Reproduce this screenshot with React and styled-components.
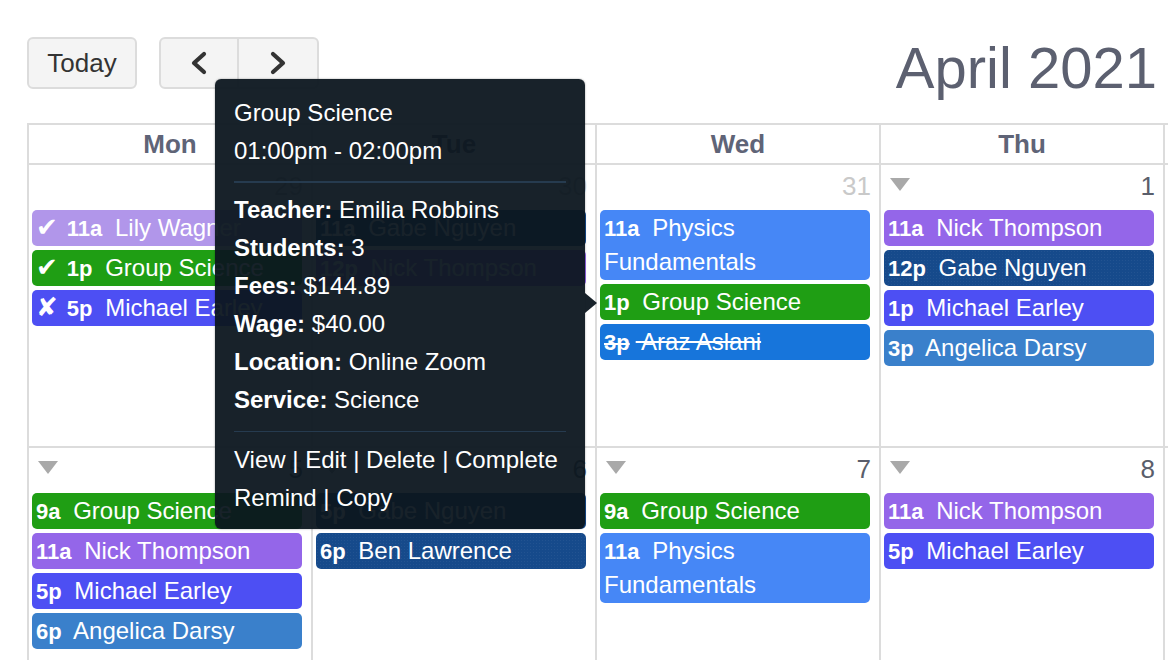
import React from 'react';
import styled, { createGlobalStyle, css } from 'styled-components';

const GlobalStyle = createGlobalStyle`
  html, body {
    margin: 0;
    padding: 0;
    background: #fff;
    overflow: hidden;
  }
  body {
    font-family: "Liberation Sans", Arial, sans-serif;
  }
`;

const colors = {
  lavender: '#b196ea',
  green: '#1f9e14',
  violet: '#4d4ff3',
  physics: '#4687f6',
  araz: '#1775db',
  purple: '#9466e9',
  navy: '#164a8b',
  angelica: '#3a80cb',
};

const Page = styled.div`
  position: relative;
  width: 100vw;
  height: 100vh;
  padding-left: 27px;
  box-sizing: border-box;
  overflow: hidden;
`;

const Toolbar = styled.div`
  display: flex;
  align-items: center;
  justify-content: space-between;
  padding-top: 37px;
  margin-right: 11px;
  margin-bottom: 34px;
  height: 52px;
`;

const ButtonRow = styled.div`
  display: flex;
  align-items: center;
  gap: 22px;
`;

const Button = styled.button`
  display: flex;
  align-items: center;
  justify-content: center;
  height: 52px;
  width: ${p => p.$width || 110}px;
  background: #f4f4f4;
  border: 2px solid #dcdcdc;
  border-radius: 6px;
  color: #333;
  font-family: "Liberation Sans", Arial, sans-serif;
  font-size: 26px;
  padding: 0;
  box-sizing: border-box;
`;

const ButtonGroup = styled.div`
  display: flex;

  ${Button}:first-child {
    border-top-right-radius: 0;
    border-bottom-right-radius: 0;
  }
  ${Button}:last-child {
    border-top-left-radius: 0;
    border-bottom-left-radius: 0;
    border-left: none;
  }
`;

const Title = styled.h2`
  margin: 9px 0 0;
  font-size: 58px;
  font-weight: normal;
  line-height: 58px;
  color: #5c6070;
`;

const Grid = styled.div`
  display: grid;
  grid-template-columns: repeat(7, 282px);
  grid-template-rows: 38px 281px 282px;
  gap: 2px;
  padding: 2px;
  background: #dcdcdc;
  width: max-content;
`;

const HeadCell = styled.div`
  background: #fff;
  display: flex;
  align-items: center;
  justify-content: center;
  font-size: 26px;
  font-weight: bold;
  color: #5f6477;
`;

const DayCell = styled.div`
  background: #fff;
  display: flex;
  flex-direction: column;
`;

const DayTop = styled.div`
  height: 45px;
  display: flex;
  justify-content: space-between;
  align-items: flex-start;
  padding: 8px 8px 0 9px;
  box-sizing: border-box;
`;

const Caret = styled.span`
  width: 0;
  height: 0;
  margin-top: 5px;
  border-left: 10px solid transparent;
  border-right: 10px solid transparent;
  border-top: 13px solid #a9a9a9;
  visibility: ${p => (p.$hidden ? 'hidden' : 'visible')};
`;

const DayNum = styled.span`
  font-size: 26px;
  line-height: 26px;
  color: ${p => (p.$other ? '#c9c9c9' : '#5a5e6b')};
`;

const EventList = styled.div`
  display: flex;
  flex-direction: column;
  gap: 4px;
  padding: 0 9px 0 3px;
`;

const Event = styled.div`
  background-color: ${p => p.$color};
  color: #fff;
  font-size: 24px;
  line-height: 34px;
  padding: 1px 4px;
  border-radius: 5px;
  overflow: hidden;
  white-space: ${p => (p.$wrap ? 'normal' : 'nowrap')};
  text-decoration: ${p => (p.$cancelled ? 'line-through' : 'none')};
  ${p =>
    p.$dotted &&
    css`
      background-image: radial-gradient(rgba(255, 255, 255, 0.05) 0.8px, transparent 1px);
      background-size: 3px 3px;
    `}
`;

const Time = styled.b`
  font-size: 22px;
  line-height: 1;
  margin-right: 6px;
`;

const Mark = styled.b`
  margin-right: 9px;
  font-family: "DejaVu Sans", sans-serif;
  font-size: 26px;
  line-height: 1;
`;

const Tooltip = styled.div`
  position: absolute;
  left: 215px;
  top: 79px;
  width: 370px;
  box-sizing: border-box;
  padding: 15px 19px 12px;
  background: rgba(12, 22, 31, 0.95);
  border-radius: 6px;
  box-shadow: 0 0 2px rgba(0, 0, 0, 0.4);
  color: #fff;
  font-size: 24px;
  line-height: 38px;

  &::after {
    content: '';
    position: absolute;
    right: -12px;
    top: 214px;
    border-top: 10px solid transparent;
    border-bottom: 10px solid transparent;
    border-left: 12px solid rgba(12, 22, 31, 0.95);
  }
`;

const Divider = styled.hr`
  border: none;
  height: 1.5px;
  background: #263b4f;
  margin: ${p => p.$margin};
`;

const Label = styled.b``;

const CheveronIcon = ({ dir }) => (
  <svg width="20" height="24" viewBox="0 0 20 24">
    <polyline
      points={dir === 'left' ? '15,3 5,12 15,21' : '5,3 15,12 5,21'}
      fill="none"
      stroke="#333"
      strokeWidth="4.2"
      strokeLinecap="round"
      strokeLinejoin="round"
    />
  </svg>
);

const days = ['Mon', 'Tue', 'Wed', 'Thu', 'Fri', 'Sat', 'Sun'];

const weeks = [
  [
    {
      day: 29,
      other: true,
      events: [
        { mark: '✔', time: '11a', title: 'Lily Wagner', color: colors.lavender },
        { mark: '✔', time: '1p', title: 'Group Science', color: colors.green },
        { mark: '✘', time: '5p', title: 'Michael Earley', color: colors.violet },
      ],
    },
    {
      day: 30,
      other: true,
      events: [
        { time: '11a', title: 'Gabe Nguyen', color: colors.navy, dotted: true },
        { time: '12p', title: 'Nick Thompson', color: colors.purple },
      ],
    },
    {
      day: 31,
      other: true,
      events: [
        { time: '11a', title: 'Physics Fundamentals', color: colors.physics, wrap: true },
        { time: '1p', title: 'Group Science', color: colors.green },
        { time: '3p', title: 'Araz Aslani', color: colors.araz, cancelled: true },
      ],
    },
    {
      day: 1,
      events: [
        { time: '11a', title: 'Nick Thompson', color: colors.purple },
        { time: '12p', title: 'Gabe Nguyen', color: colors.navy, dotted: true },
        { time: '1p', title: 'Michael Earley', color: colors.violet },
        { time: '3p', title: 'Angelica Darsy', color: colors.angelica },
      ],
    },
    { day: 2, events: [] },
    { day: 3, events: [] },
    { day: 4, events: [] },
  ],
  [
    {
      day: 5,
      events: [
        { time: '9a', title: 'Group Science', color: colors.green },
        { time: '11a', title: 'Nick Thompson', color: colors.purple },
        { time: '5p', title: 'Michael Earley', color: colors.violet },
        { time: '6p', title: 'Angelica Darsy', color: colors.angelica },
      ],
    },
    {
      day: 6,
      events: [
        { time: '5p', title: 'Gabe Nguyen', color: colors.navy, dotted: true },
        { time: '6p', title: 'Ben Lawrence', color: colors.navy, dotted: true },
      ],
    },
    {
      day: 7,
      events: [
        { time: '9a', title: 'Group Science', color: colors.green },
        { time: '11a', title: 'Physics Fundamentals', color: colors.physics, wrap: true },
      ],
    },
    {
      day: 8,
      events: [
        { time: '11a', title: 'Nick Thompson', color: colors.purple },
        { time: '5p', title: 'Michael Earley', color: colors.violet },
      ],
    },
    { day: 9, events: [] },
    { day: 10, events: [] },
    { day: 11, events: [] },
  ],
];

const details = [
  ['Teacher:', 'Emilia Robbins'],
  ['Students:', '3'],
  ['Fees:', '$144.89'],
  ['Wage:', '$40.00'],
  ['Location:', 'Online Zoom'],
  ['Service:', 'Science'],
];

const App = () => {
  return (
    <>
      <GlobalStyle />
      <Page>
        <Toolbar>
          <ButtonRow>
            <Button>Today</Button>
            <ButtonGroup>
              <Button $width={80}>
                <CheveronIcon dir="left" />
              </Button>
              <Button $width={80}>
                <CheveronIcon dir="right" />
              </Button>
            </ButtonGroup>
          </ButtonRow>
          <Title>April 2021</Title>
        </Toolbar>

        <Grid>
          {days.map(d => (
            <HeadCell key={d}>{d}</HeadCell>
          ))}
          {weeks.flat().map(cell => (
            <DayCell key={`${cell.day}-${cell.other ? 'o' : 'c'}`}>
              <DayTop>
                <Caret $hidden={cell.other} />
                <DayNum $other={cell.other}>{cell.day}</DayNum>
              </DayTop>
              <EventList>
                {cell.events.map((ev, i) => (
                  <Event
                    key={i}
                    $color={ev.color}
                    $dotted={ev.dotted}
                    $cancelled={ev.cancelled}
                    $wrap={ev.wrap}
                  >
                    {ev.mark && <Mark>{ev.mark}</Mark>}
                    <Time>{ev.time}</Time> {ev.title}
                  </Event>
                ))}
              </EventList>
            </DayCell>
          ))}
        </Grid>

        <Tooltip>
          <div>Group Science</div>
          <div>01:00pm - 02:00pm</div>
          <Divider $margin="11px 0 8px" />
          {details.map(([k, v]) => (
            <div key={k}>
              <Label>{k}</Label> {v}
            </div>
          ))}
          <Divider $margin="12px 0 9px" />
          <div>View | Edit | Delete | Complete</div>
          <div>Remind | Copy</div>
        </Tooltip>
      </Page>
    </>
  );
};

export default App;
